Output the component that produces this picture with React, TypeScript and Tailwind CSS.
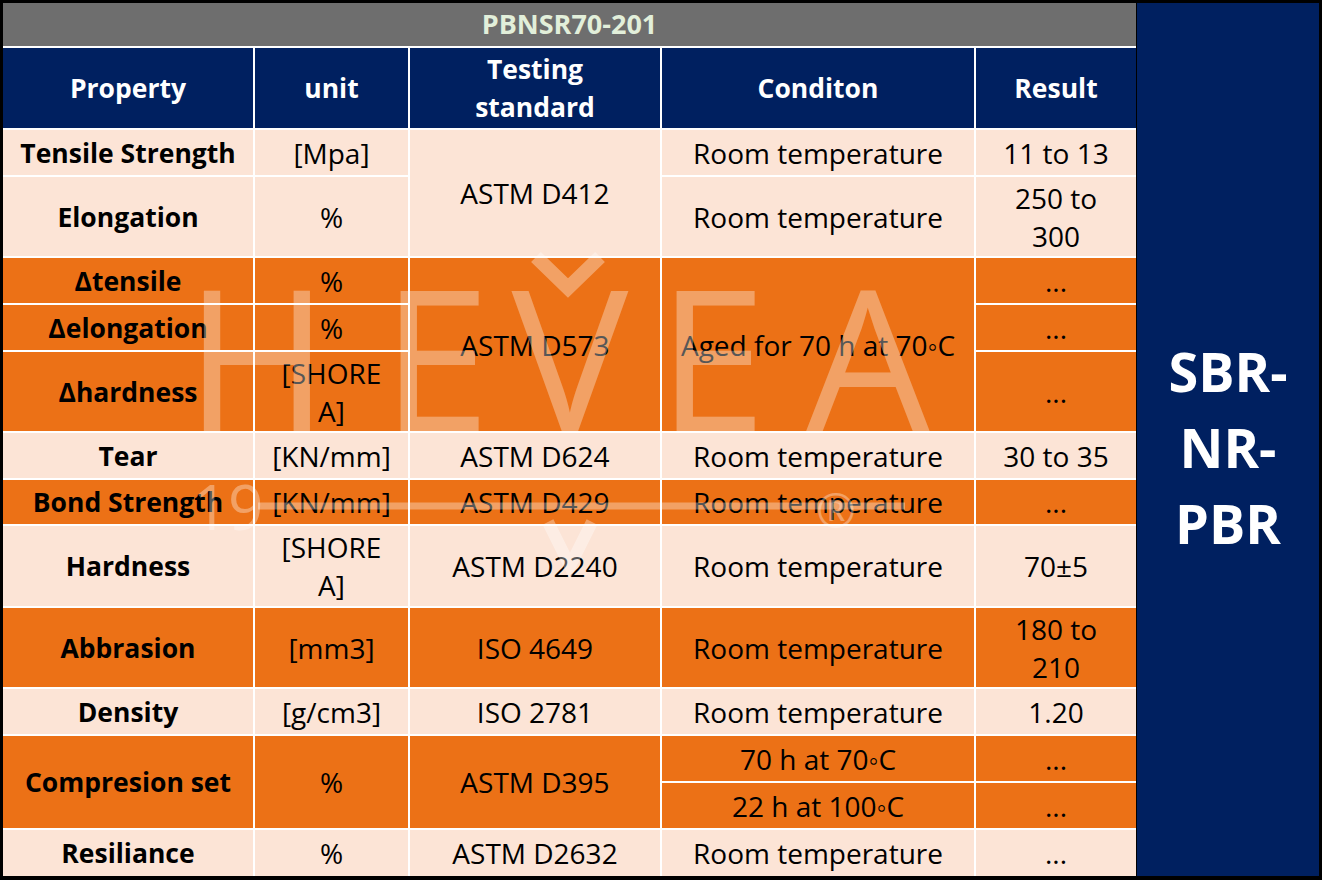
import type { ReactNode } from "react";
import clsx from "clsx";

type Tone = "peach" | "orange" | "navy";

function Cell({
  pos,
  tone,
  bold,
  children,
}: {
  pos: string;
  tone: Tone;
  bold?: boolean;
  children: ReactNode;
}) {
  return (
    <div
      className={clsx(
        "flex items-center justify-center text-center leading-[38px]",
        pos,
        tone === "peach" && "bg-[#fce4d6] text-black",
        tone === "orange" && "bg-[#ec7116] text-black",
        tone === "navy" && "bg-[#002060] text-white",
        bold ? "text-[26.5px] font-bold" : "text-[28px]"
      )}
    >
      <span>{children}</span>
    </div>
  );
}

function Watermark() {
  // faded HEVEA logo lying over the table
  return (
    <svg
      className="pointer-events-none absolute left-0 top-0"
      width={1322}
      height={880}
      viewBox="0 0 1322 880"
    >
      <g fill="#ffffff" fillOpacity={0.34} style={{ fontFamily: '"Open Sans", sans-serif' }}>
        <text x={257} y={431} fontSize={196} fontWeight={400} textAnchor="middle">H</text>
        <text x={436} y={431} fontSize={196} fontWeight={400} textAnchor="middle">E</text>
        <text x={570} y={431} fontSize={196} fontWeight={400} textAnchor="middle">V</text>
        <text x={712} y={431} fontSize={196} fontWeight={400} textAnchor="middle">E</text>
        <text x={868} y={431} fontSize={196} fontWeight={400} textAnchor="middle">A</text>
        <text x={228} y={530} fontSize={62} fontWeight={400} textAnchor="middle">19</text>
        <text x={836} y={528} fontSize={48} fontWeight={400} textAnchor="middle">®</text>
      </g>
      <g stroke="#ffffff" strokeOpacity={0.34} fill="none">
        <polyline points="536,257 568,288 600,257" strokeWidth={14} />
        <line x1={258} y1={506} x2={905} y2={506} strokeWidth={7} />
        <polyline points="548,522 570,566 592,522" strokeWidth={12} />
      </g>
    </svg>
  );
}

export default function App() {
  return (
    <div
      className="relative flex h-[880px] w-[1322px] gap-px bg-black pb-[4px] pl-[3px] pr-[3px] pt-[3px]"
      style={{ fontFamily: '"Open Sans", "Noto Sans", sans-serif' }}
    >
      {/* Table */}
      <div className="grid w-[1133px] grid-cols-[250px_153px_250px_312px_160px] grid-rows-[43px_80px_45px_79px_45px_45px_79px_45px_44px_80px_79px_45px_45px_45px_46px] gap-[2px] bg-white">
        <div className="col-span-5 col-start-1 row-start-1 flex items-center justify-center bg-[#6e6e6e] text-[27px] font-bold text-[#e2efda]">
          PBNSR70-201
        </div>

        <Cell pos="col-start-1 row-start-2" tone="navy" bold>Property</Cell>
        <Cell pos="col-start-2 row-start-2" tone="navy" bold>unit</Cell>
        <Cell pos="col-start-3 row-start-2" tone="navy" bold>Testing<br />standard</Cell>
        <Cell pos="col-start-4 row-start-2" tone="navy" bold>Conditon</Cell>
        <Cell pos="col-start-5 row-start-2" tone="navy" bold>Result</Cell>

        <Cell pos="col-start-1 row-start-3" tone="peach" bold>Tensile Strength</Cell>
        <Cell pos="col-start-2 row-start-3" tone="peach">[Mpa]</Cell>
        <Cell pos="col-start-3 row-start-3 row-span-2" tone="peach">ASTM D412</Cell>
        <Cell pos="col-start-4 row-start-3" tone="peach">Room temperature</Cell>
        <Cell pos="col-start-5 row-start-3" tone="peach">11 to 13</Cell>

        <Cell pos="col-start-1 row-start-4" tone="peach" bold>Elongation</Cell>
        <Cell pos="col-start-2 row-start-4" tone="peach">%</Cell>
        <Cell pos="col-start-4 row-start-4" tone="peach">Room temperature</Cell>
        <Cell pos="col-start-5 row-start-4" tone="peach">250 to<br />300</Cell>

        <Cell pos="col-start-1 row-start-5" tone="orange" bold>Δtensile</Cell>
        <Cell pos="col-start-2 row-start-5" tone="orange">%</Cell>
        <Cell pos="col-start-3 row-start-5 row-span-3" tone="orange">ASTM D573</Cell>
        <Cell pos="col-start-4 row-start-5 row-span-3" tone="orange">Aged for 70 h at 70◦C</Cell>
        <Cell pos="col-start-5 row-start-5" tone="orange">...</Cell>

        <Cell pos="col-start-1 row-start-6" tone="orange" bold>Δelongation</Cell>
        <Cell pos="col-start-2 row-start-6" tone="orange">%</Cell>
        <Cell pos="col-start-5 row-start-6" tone="orange">...</Cell>

        <Cell pos="col-start-1 row-start-7" tone="orange" bold>Δhardness</Cell>
        <Cell pos="col-start-2 row-start-7" tone="orange">[SHORE<br />A]</Cell>
        <Cell pos="col-start-5 row-start-7" tone="orange">...</Cell>

        <Cell pos="col-start-1 row-start-8" tone="peach" bold>Tear</Cell>
        <Cell pos="col-start-2 row-start-8" tone="peach">[KN/mm]</Cell>
        <Cell pos="col-start-3 row-start-8" tone="peach">ASTM D624</Cell>
        <Cell pos="col-start-4 row-start-8" tone="peach">Room temperature</Cell>
        <Cell pos="col-start-5 row-start-8" tone="peach">30 to 35</Cell>

        <Cell pos="col-start-1 row-start-9" tone="orange" bold>Bond Strength</Cell>
        <Cell pos="col-start-2 row-start-9" tone="orange">[KN/mm]</Cell>
        <Cell pos="col-start-3 row-start-9" tone="orange">ASTM D429</Cell>
        <Cell pos="col-start-4 row-start-9" tone="orange">Room temperature</Cell>
        <Cell pos="col-start-5 row-start-9" tone="orange">...</Cell>

        <Cell pos="col-start-1 row-start-10" tone="peach" bold>Hardness</Cell>
        <Cell pos="col-start-2 row-start-10" tone="peach">[SHORE<br />A]</Cell>
        <Cell pos="col-start-3 row-start-10" tone="peach">ASTM D2240</Cell>
        <Cell pos="col-start-4 row-start-10" tone="peach">Room temperature</Cell>
        <Cell pos="col-start-5 row-start-10" tone="peach">70±5</Cell>

        <Cell pos="col-start-1 row-start-11" tone="orange" bold>Abbrasion</Cell>
        <Cell pos="col-start-2 row-start-11" tone="orange">[mm3]</Cell>
        <Cell pos="col-start-3 row-start-11" tone="orange">ISO 4649</Cell>
        <Cell pos="col-start-4 row-start-11" tone="orange">Room temperature</Cell>
        <Cell pos="col-start-5 row-start-11" tone="orange">180 to<br />210</Cell>

        <Cell pos="col-start-1 row-start-12" tone="peach" bold>Density</Cell>
        <Cell pos="col-start-2 row-start-12" tone="peach">[g/cm3]</Cell>
        <Cell pos="col-start-3 row-start-12" tone="peach">ISO 2781</Cell>
        <Cell pos="col-start-4 row-start-12" tone="peach">Room temperature</Cell>
        <Cell pos="col-start-5 row-start-12" tone="peach">1.20</Cell>

        <Cell pos="col-start-1 row-start-13 row-span-2" tone="orange" bold>Compresion set</Cell>
        <Cell pos="col-start-2 row-start-13 row-span-2" tone="orange">%</Cell>
        <Cell pos="col-start-3 row-start-13 row-span-2" tone="orange">ASTM D395</Cell>
        <Cell pos="col-start-4 row-start-13" tone="orange">70 h at 70◦C</Cell>
        <Cell pos="col-start-5 row-start-13" tone="orange">...</Cell>
        <Cell pos="col-start-4 row-start-14" tone="orange">22 h at 100◦C</Cell>
        <Cell pos="col-start-5 row-start-14" tone="orange">...</Cell>

        <Cell pos="col-start-1 row-start-15" tone="peach" bold>Resiliance</Cell>
        <Cell pos="col-start-2 row-start-15" tone="peach">%</Cell>
        <Cell pos="col-start-3 row-start-15" tone="peach">ASTM D2632</Cell>
        <Cell pos="col-start-4 row-start-15" tone="peach">Room temperature</Cell>
        <Cell pos="col-start-5 row-start-15" tone="peach">...</Cell>
      </div>

      {/* Side label */}
      <div className="flex flex-1 flex-col items-center justify-center bg-[#002060] pt-[14px] text-[54px] font-bold leading-[76px] text-white">
        <span>SBR-</span>
        <span>NR-</span>
        <span>PBR</span>
      </div>

      <Watermark />
    </div>
  );
}
